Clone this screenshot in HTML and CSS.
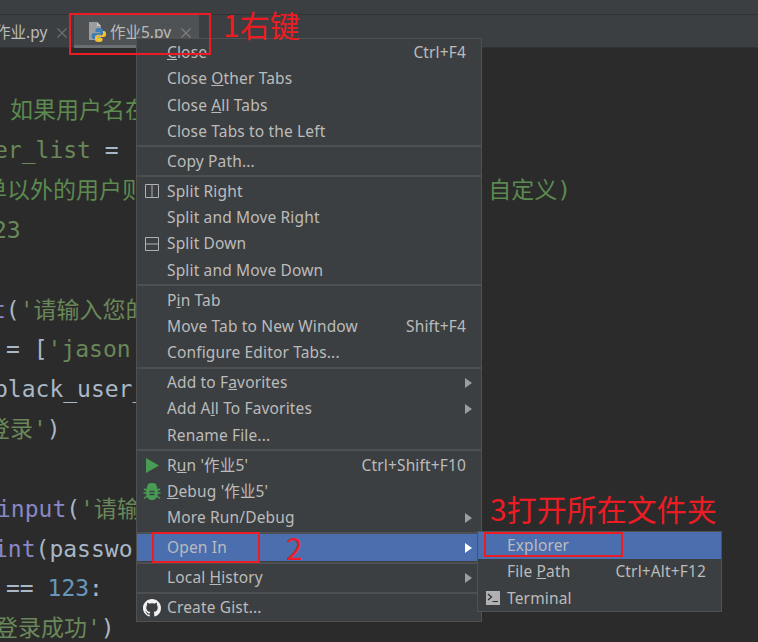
FILE: index.html
```html
<!DOCTYPE html>
<html lang="zh">
<head>
<meta charset="utf-8">
<title>作业5.py</title>
<link rel="stylesheet" href="styles.css">
</head>
<body>
<div class="app">
  <div class="topbar"></div>
  <div class="tabs">
    <div class="tab inactive"><span>作业.py</span><svg class="close" width="10" height="10" viewBox="0 0 10 10"><path d="M.5.5l9 9M9.500.5l-9 9" stroke="#6f7173" stroke-width="1.100" fill="none"/></svg></div>
    <div class="tab active">
      <svg class="pyicon" width="18" height="21" viewBox="0 0 18 21">
        <path d="M1 1h8l4 4v14H1z" fill="#9a9c9e"/>
        <path d="M9 1l4 4H9z" fill="#c4c6c8"/>
        <path d="M11 7c-3 0-3.500 1-3.500 2v2H12v1H6c-1.500 0-2.500 1-2.500 3s1 3 2.500 3h1v-2c0-1.500 1-2.500 2.500-2.500H13c1 0 2-1 2-2V9c0-1-1-2-4-2z" fill="#3d7fb5"/>
        <path d="M11 21c3 0 3.500-1 3.500-2v-2H10v-1h6c1.500 0 2-1 2-3s-.5-3-2-3h-1v2c0 1.500-1 2.500-2.500 2.500H9c-1 0-2 1-2 2V19c0 1 1 2 4 2z" fill="#f2c230"/>
      </svg>
      <span>作业5.py</span><svg class="close" width="10" height="10" viewBox="0 0 10 10"><path d="M.5.5l9 9M9.500.5l-9 9" stroke="#7f8183" stroke-width="1.100" fill="none"/></svg>
    </div>
  </div>
  <div class="editor">
    <div class="line"></div>
    <div class="line c-comment in-a">如果用户名在</div>
    <div class="line c-str in-b">er_list <span class="c-op">=</span></div>
    <div class="line c-comment in-c right-note"><span>单以外的用户则</span><span><span class="colon">:</span>自定义)</span></div>
    <div class="line c-str in-d">23</div>
    <div class="line"></div>
    <div class="line c-op in-e"><span class="c-fn">t</span>(<span class="c-str">'请输入您的</span></div>
    <div class="line c-op in-f">= [<span class="c-str">'jason'</span></div>
    <div class="line c-op in-b">black_user_</div>
    <div class="line c-op in-g"><span class="c-str">登录'</span>)</div>
    <div class="line"></div>
    <div class="line c-op in-h"><span class="c-fn">input</span>(<span class="c-str">'请输入</span></div>
    <div class="line c-op in-i"><span class="c-fn">int</span>(password</div>
    <div class="line c-op in-f">== <span class="c-num">123</span>:</div>
    <div class="line c-op in-j"><span class="c-str">登录成功'</span>)</div>
  </div>

  <div class="menu">
    <div class="item"><span class="slot"></span><span class="label"><u>C</u>lose</span><span class="key">Ctrl+F4</span></div>
    <div class="item"><span class="slot"></span><span class="label">Close <u>O</u>ther Tabs</span></div>
    <div class="item"><span class="slot"></span><span class="label">Close <u>A</u>ll Tabs</span></div>
    <div class="item"><span class="slot"></span><span class="label">Close Tabs to the Left</span></div>
    <div class="sep"></div>
    <div class="item"><span class="slot"></span><span class="label">Copy Path...</span></div>
    <div class="sep"></div>
    <div class="item"><span class="slot"><svg width="14" height="14" viewBox="0 0 14 14"><path d="M.5.5h13v13H.5zM7 .5v13" fill="none" stroke="#afb1b3"/></svg></span><span class="label">Split Right</span></div>
    <div class="item"><span class="slot"></span><span class="label">Split and Move Right</span></div>
    <div class="item"><span class="slot"><svg width="14" height="14" viewBox="0 0 14 14"><path d="M.5.5h13v13H.5zM.5 7h13" fill="none" stroke="#afb1b3"/></svg></span><span class="label">Split Down</span></div>
    <div class="item"><span class="slot"></span><span class="label">Split and Move Down</span></div>
    <div class="sep"></div>
    <div class="item"><span class="slot"></span><span class="label">P<u>i</u>n Tab</span></div>
    <div class="item"><span class="slot"></span><span class="label">Move Tab to New Window</span><span class="key">Shift+F4</span></div>
    <div class="item"><span class="slot"></span><span class="label">Configure Editor Tabs...</span></div>
    <div class="sep"></div>
    <div class="item"><span class="slot"></span><span class="label">Add to F<u>a</u>vorites</span><span class="arrow"></span></div>
    <div class="item"><span class="slot"></span><span class="label">Add A<u>l</u>l To Favorites</span><span class="arrow"></span></div>
    <div class="item"><span class="slot"></span><span class="label">Rename File...</span></div>
    <div class="sep"></div>
    <div class="item"><span class="slot"><svg width="13" height="15" viewBox="0 0 13 15"><path d="M0 0l13 7.500L0 15z" fill="#499c54"/></svg></span><span class="label">R<u>u</u>n '作业5'</span><span class="key">Ctrl+Shift+F10</span></div>
    <div class="item"><span class="slot"><svg width="18" height="17" viewBox="0 0 18 17"><path d="M4.500 5.500a4.500 5 0 0 1 9 0zM4 6.500h10v4.500a5 5.500 0 0 1-10 0zM5 1l2 3M13 1l-2 3M4 7.500L1 6M14 7.500L17 6M4 10H.5M14 10h3.500M4 13l-3 2.500M14 13l3 2.500" fill="#499c54" stroke="#499c54" stroke-width="1.400"/><path d="M6.500 8.500h5M6.500 11.500h5" stroke="#3c3f41" stroke-width="1.500"/></svg></span><span class="label"><u>D</u>ebug '作业5'</span></div>
    <div class="item"><span class="slot"></span><span class="label">More Run/Debug</span><span class="arrow"></span></div>
    <div class="sep"></div>
    <div class="item selected open-in"><span class="slot"></span><span class="label">Open In</span><span class="arrow white"></span>
      <div class="submenu">
        <div class="item selected"><span class="slot"></span><span class="label">Explorer</span></div>
        <div class="item"><span class="slot"></span><span class="label">File <u>P</u>ath</span><span class="key">Ctrl+Alt+F12</span></div>
        <div class="item"><span class="slot"><svg width="14" height="14" viewBox="0 0 14 14"><path d="M0 0h14v14H0z" fill="#afb1b3"/><path d="M2 3l3.500 3L2 9M6.500 10.500H12" fill="none" stroke="#2b2b2b" stroke-width="1.200"/></svg></span><span class="label">Terminal</span></div>
      </div>
    </div>
    <div class="sep"></div>
    <div class="item"><span class="slot"></span><span class="label">Local <u>H</u>istory</span><span class="arrow"></span></div>
    <div class="sep"></div>
    <div class="item"><span class="slot"><svg width="18" height="18" viewBox="0 0 16 16"><path fill="#f2f2f2" d="M8 0C3.580 0 0 3.580 0 8c0 3.540 2.290 6.530 5.470 7.590.4.070.55-.17.55-.38 0-.19-.01-.82-.01-1.490-2.010.37-2.530-.49-2.690-.94-.09-.23-.48-.94-.82-1.130-.28-.15-.68-.52-.01-.53.63-.01 1.080.58 1.230.82.72 1.210 1.870.87 2.330.66.07-.52.28-.87.51-1.070-1.780-.2-3.640-.89-3.640-3.950 0-.87.31-1.590.82-2.150-.08-.2-.36-1.020.08-2.120 0 0 .67-.21 2.200.82.64-.18 1.320-.27 2-.27.68 0 1.360.09 2 .27 1.530-1.040 2.200-.82 2.200-.82.44 1.100.16 1.920.08 2.120.51.56.82 1.270.82 2.150 0 3.070-1.870 3.750-3.650 3.950.29.25.54.73.54 1.480 0 1.070-.01 1.930-.01 2.200 0 .21.15.46.55.38A8.013 8.013 0 0 0 16 8c0-4.420-3.580-8-8-8z"/></svg></span><span class="label">Create Gist...</span></div>
  </div>

  <div class="mark box-tab"></div>
  <div class="mark box-open"></div>
  <div class="mark box-explorer"></div>
  <div class="note-red note-1">1右键</div>
  <div class="note-red note-2">2</div>
  <div class="note-red note-3">3打开所在文件夹</div>
</div>
</body>
</html>
```
FILE: styles.css
```css
* { box-sizing: border-box; }
html, body { margin: 0; padding: 0; background: #2b2b2b; }
.app {
  position: relative;
  width: 758px;
  height: 642px;
  overflow: hidden;
  display: flex;
  flex-direction: column;
  font-family: "Noto Sans", "Noto Sans CJK SC", sans-serif;
  color: #bbbbbb;
}
.topbar { height: 15px; flex: none; background: #3c3f41; border-bottom: 1px solid #323232; }
.tabs {
  height: 33px;
  flex: none;
  display: flex;
  background: #3c3f41;
  border-bottom: 1px solid #323232;
  font-size: 15.5px;
}
.tab { display: flex; align-items: center; height: 33px; }
.tab.inactive { width: 74px; margin-left: -5px; }
.tab.active {
  width: 125px;
  background: #4e5254;
  border-bottom: 3px solid #6b6f71;
  padding: 3px 0 0 14px;
  margin-left: 5px;
}
.pyicon { margin-right: 4px; flex: none; }
.close { flex: none; margin-left: 10px; margin-top: 2px; }
.editor {
  flex: 1;
  min-height: 0;
  background: #2b2b2b;
  padding-top: 3.5px;
  font-family: "DejaVu Sans Mono", "Noto Sans CJK SC", monospace;
  font-size: 23px;
  overflow: hidden;
}
.line { height: 39.85px; line-height: 39.85px; white-space: pre; }
.in-a { margin-left: 10px; }
.in-b { margin-left: -6px; }
.in-c { margin-left: -16px; }
.in-d { margin-left: -7px; }
.in-e { margin-left: -8px; }
.in-f { margin-left: 6px; }
.in-g { margin-left: -13px; }
.in-h { margin-left: -3px; }
.in-i { margin-left: -6px; }
.in-j { margin-left: -5px; }
.right-note { display: flex; justify-content: space-between; width: 587px; }
.colon { letter-spacing: 2.6px; }
.c-comment { color: #5c8a50; }
.c-str { color: #6a8759; }
.c-op { color: #a9b7c6; }
.c-fn { color: #8888c6; }
.c-num { color: #6897bb; }

.menu, .submenu {
  background: #3c3f41;
  border: 1px solid #515151;
  font-size: 15.5px;
  letter-spacing: 0.15px;
}
.menu {
  position: absolute;
  left: 136px;
  top: 38px;
  width: 346px;
  padding-top: 0.3px;
}
.submenu {
  position: absolute;
  left: 340px;
  top: -3px;
  width: 245px;
  height: 81px;
}
.item {
  position: relative;
  display: flex;
  align-items: center;
  height: 26.3px;
  padding-right: 9px;
  white-space: nowrap;
}
.slot { width: 30px; flex: none; display: flex; align-items: center; justify-content: center; }
.submenu .slot { width: 29px; }
.label { flex: 1; padding-bottom: 1px; }
.key { margin-right: 6px; padding-bottom: 1px; }
.sep { height: 3.65px; display: flex; align-items: center; }
.sep::before { content: ""; display: block; width: 100%; height: 2px; background: #4d4f51; }
.selected { background: #4b6eaf; }
.arrow {
  width: 0;
  height: 0;
  border-left: 7px solid #9b9d9f;
  border-top: 5px solid transparent;
  border-bottom: 5px solid transparent;
}
.arrow.white { border-left-color: #ffffff; }

.mark { position: absolute; border: 2px solid #ed1c24; }
.box-tab { left: 69px; top: 13px; width: 142px; height: 42px; }
.box-open { left: 152px; top: 532px; width: 108px; height: 31px; }
.box-explorer { left: 484px; top: 532px; width: 139px; height: 25px; }
.note-red {
  position: absolute;
  color: #ed1c24;
  font-family: "Noto Sans CJK SC", "Noto Sans", sans-serif;
  font-size: 30px;
  line-height: 38px;
  white-space: nowrap;
}
.note-1 { left: 223px; top: 5px; }
.note-2 { left: 286px; top: 528px; }
.note-3 { left: 490px; top: 489px; }
```
